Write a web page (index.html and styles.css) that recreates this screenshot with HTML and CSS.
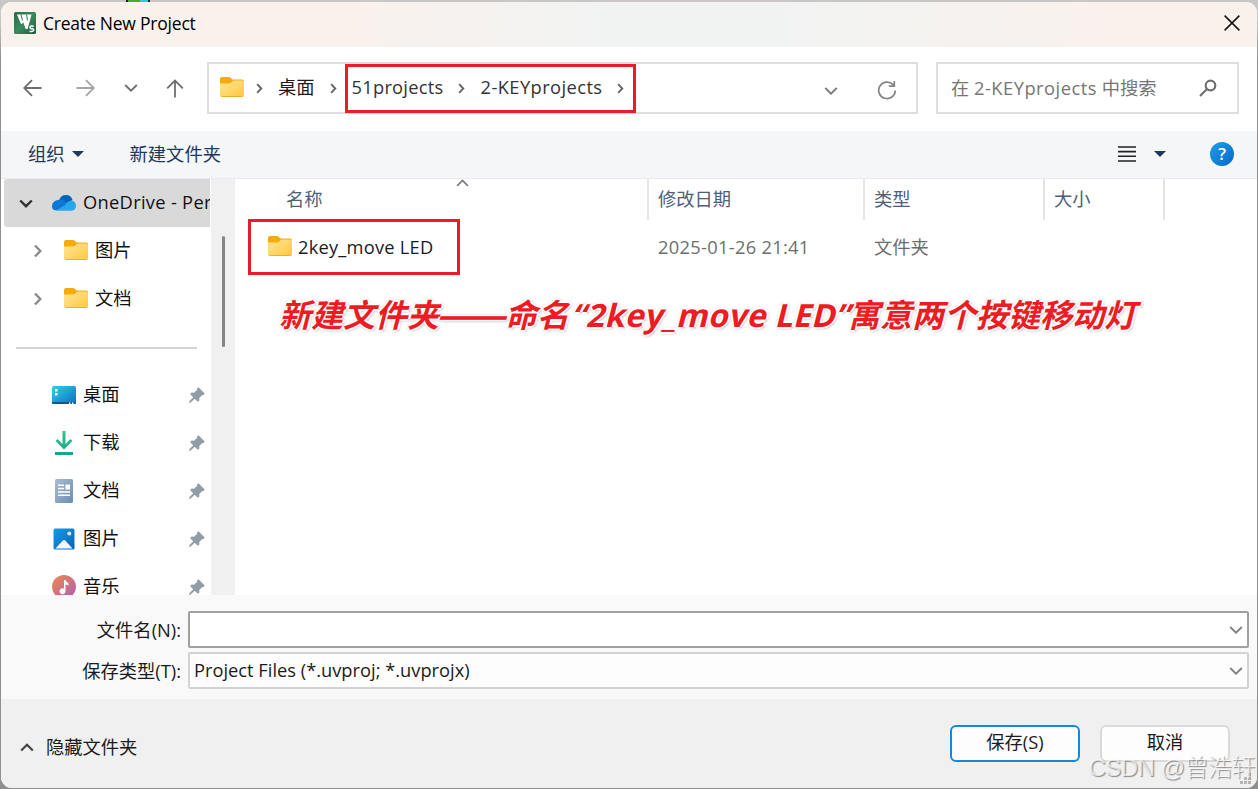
FILE: index.html
```html
<!DOCTYPE html>
<html lang="zh-CN">
<head>
    <meta charset="UTF-8">
    <meta name="viewport" content="width=device-width, initial-scale=1.0">
    <title>Create New Project</title>
    <link rel="stylesheet" href="styles.css">
</head>
<body>
    <!-- Shared icons -->
    <svg class="defs" width="0" height="0">
        <defs>
            <linearGradient id="gFolder" x1="0" y1="0" x2="1" y2="1">
                <stop offset="0" stop-color="#ffe69c"/><stop offset="1" stop-color="#ffc83a"/>
            </linearGradient>
            <linearGradient id="gDesk" x1="0" y1="0" x2="1" y2="1">
                <stop offset="0" stop-color="#35d0e4"/><stop offset="1" stop-color="#0a6fc2"/>
            </linearGradient>
            <linearGradient id="gDoc" x1="0" y1="0" x2="1" y2="1">
                <stop offset="0" stop-color="#a9bdd3"/><stop offset="1" stop-color="#6f8db0"/>
            </linearGradient>
            <linearGradient id="gPic" x1="0" y1="0" x2="1" y2="1">
                <stop offset="0" stop-color="#1a9be6"/><stop offset="1" stop-color="#0563b8"/>
            </linearGradient>
            <linearGradient id="gMusic" x1="0" y1="0" x2="1" y2="1">
                <stop offset="0" stop-color="#f08a4b"/><stop offset="1" stop-color="#b05cb4"/>
            </linearGradient>
            <linearGradient id="gDown" x1="0" y1="0" x2="0" y2="1">
                <stop offset="0" stop-color="#35c48d"/><stop offset="1" stop-color="#12a594"/>
            </linearGradient>
            <linearGradient id="gApp" x1="0" y1="0" x2="1" y2="1">
                <stop offset="0" stop-color="#2a6a4c"/><stop offset=".5" stop-color="#3b8a5c"/><stop offset="1" stop-color="#1f5b3b"/>
            </linearGradient>
        </defs>
        <symbol id="folder" viewBox="0 0 24 20">
            <path fill="#f3ac0b" d="M0 8V2Q0 0 2 0h7q1 0 1.700.7L12.500 2.500H22q2 0 2 2V8z"/>
            <path fill="url(#gFolder)" d="M0 6.500h9q1.200 0 2-.8l1.500-1.500q.7-.7 1.700-.7H22q2 0 2 2V18q0 2-2 2H2q-2 0-2-2z"/>
            <path stroke="#eeae2c" fill="none" stroke-width="1" d="M.8 18.900q.5.600 1.400.6h19.600q.9 0 1.400-.6"/>
        </symbol>
        <symbol id="pin" viewBox="0 0 16 16">
            <path fill="#919ca4" d="M9.500.3 15.700 6.500 14.500 8l-1.200-.1-3 3 .1 2.600-1.700 1.300-3-3L1.300 15.700H.2v-1.100L4.200 10.300 1.200 7.200 2.500 5.600l2.600.1 3-3-.1-1.200z"/>
        </symbol>
        <symbol id="down" viewBox="0 0 14 8"><path fill="none" stroke="currentColor" d="M1.200 1 7 6.700 12.800 1"/></symbol>
        <symbol id="right" viewBox="0 0 8 14"><path fill="none" stroke="currentColor" stroke-width="2.400" d="M1 1.500 6.300 7 1 12.500"/></symbol>
    </svg>

    <div class="dialog">
        <header class="titlebar">
            <svg class="app-icon" viewBox="0 0 22 22">
                <rect width="22" height="22" rx="1.500" fill="url(#gApp)"/>
                <path fill="#fff" d="M3 2.500h14.500L13.600 17h-1.900L9.400 10.500 7.800 12H7z"/>
                <path stroke="#3b8a5c" stroke-width="1.100" d="m7 2.500 1.500 6M12.500 2.500l1 6"/>
                <path fill="none" stroke="#fff" stroke-width="1.500" d="M19.800 14.200q-3.800-.8-3.800 1t1.800 1.400q2.200.3 1.800 1.800t-4 .9"/>
            </svg>
            <span class="title">Create New Project</span>
            <svg class="close" viewBox="0 0 16 16"><path stroke="#111" stroke-width="1.500" d="m.6.600 14.800 14.800M15.400.6.600 15.400"/></svg>
        </header>

        <nav class="navbar">
            <div class="nav-buttons">
                <svg width="19" height="18" viewBox="0 0 19 18"><path d="M18.500 9H1.500M9 1.200 1.200 9 9 16.800"/></svg>
                <svg class="disabled" width="19" height="18" viewBox="0 0 19 18"><path d="M.5 9h17M10 1.200 17.800 9 10 16.800"/></svg>
                <svg class="recent" width="14" height="8" viewBox="0 0 14 8"><path d="M1.200 1 7 6.700 12.800 1"/></svg>
                <svg width="18" height="19" viewBox="0 0 18 19"><path d="M9 18.500V1.500M1.200 9.300 9 1.500l7.800 7.800"/></svg>
            </div>
            <div class="address">
                <svg class="folder"><use href="#folder"/></svg>
                <svg class="sep"><use href="#right"/></svg>
                <span class="crumb-root">桌面</span>
                <svg class="sep"><use href="#right"/></svg>
                <div class="crumbs">
                    <span class="crumb-a">51projects</span>
                    <svg class="sep"><use href="#right"/></svg>
                    <span class="crumb-b">2-KEYprojects</span>
                    <svg class="sep"><use href="#right"/></svg>
                </div>
                <svg class="addr-down"><use href="#down"/></svg>
                <svg class="refresh" viewBox="0 0 20 20"><path fill="none" stroke="#858585" stroke-width="1.700" d="M18.300 10.500A8.300 8.300 0 1 1 16 4.600l1.200 1.200M17.300 1v5.200h-5.500"/></svg>
            </div>
            <div class="search">
                <span>在 <span class="latin">2-KEYprojects</span> 中搜索</span>
                <svg viewBox="0 0 18 18"><circle cx="11.500" cy="6.500" r="4.800"/><path d="M8 10 1 17"/></svg>
            </div>
        </nav>

        <div class="toolbar">
            <span>组织</span><i class="caret"></i>
            <span class="new-folder">新建文件夹</span>
            <svg class="view" viewBox="0 0 18 16"><path stroke="#222" stroke-width="1.600" d="M0 1h18M0 5.600h18M0 10.300h18M0 15h18"/></svg>
            <i class="caret"></i>
            <span class="help">?</span>
        </div>

        <main class="content">
            <aside class="tree">
                <div class="item selected">
                    <svg class="expander"><use href="#down"/></svg>
                    <svg class="icon" viewBox="0 0 24 24">
                        <path fill="#0364b8" d="M7 12q0-8 7-8 5 0 6.500 5l-6 4z"/>
                        <path fill="#0a78d4" d="M0 15.500Q0 10 6 9q5-1.500 8 2l5 3-15 5.500q-4-.5-4-4z"/>
                        <path fill="#28a8ea" d="m4 19.500 9-5.500q3-4.800 7.500-4.600Q24 11 24 15t-4.500 4.800H5z"/>
                    </svg>
                    <span class="label onedrive">OneDrive - Per</span>
                </div>
                <div class="item child">
                    <svg class="expander"><use href="#right"/></svg>
                    <svg class="folder"><use href="#folder"/></svg>
                    <span class="label">图片</span>
                </div>
                <div class="item child">
                    <svg class="expander"><use href="#right"/></svg>
                    <svg class="folder"><use href="#folder"/></svg>
                    <span class="label">文档</span>
                </div>
                <div class="divider"></div>
                <div class="item quick">
                    <svg class="icon" viewBox="0 0 24 24"><rect y="3" width="24" height="18" rx="1.500" fill="url(#gDesk)"/><path fill="#0b5a94" d="M0 19h24v.5q0 1.500-1.500 1.500h-21Q0 21 0 19.500z"/><path fill="#fff" d="M3 6h2.500v2.500H3zM3 10h2.500v2.500H3zM17 19.500h1.500V21H17zM20 19.500h1.500V21H20z"/></svg>
                    <span class="label">桌面</span>
                    <svg class="pin"><use href="#pin"/></svg>
                </div>
                <div class="item quick">
                    <svg class="icon" viewBox="0 0 24 24"><path fill="url(#gDown)" d="M10.500 0h3v13l5-5 1.900 1.900L12 18.500 3.600 9.900 5.500 8l5 5zM3 21h18v2.900H3z"/></svg>
                    <span class="label">下载</span>
                    <svg class="pin"><use href="#pin"/></svg>
                </div>
                <div class="item quick">
                    <svg class="icon" viewBox="0 0 24 24"><rect x="3" width="18" height="24" rx="1.500" fill="url(#gDoc)"/><path stroke="#fff" stroke-width="1.500" d="M6 6.300h6M6 9.500h6M6 13h12M6 16.300h12"/><path fill="#fff" d="M13.500 5.500H18v5h-4.500z"/></svg>
                    <span class="label">文档</span>
                    <svg class="pin"><use href="#pin"/></svg>
                </div>
                <div class="item quick">
                    <svg class="icon" viewBox="0 0 24 24"><rect x="1.500" y="1.500" width="21" height="21" rx="1.500" fill="url(#gPic)"/><path fill="#f3f9ff" d="m3.500 21.500 7.300-8q1.200-1.200 2.400 0l7.300 8z"/><circle cx="17.300" cy="6.500" r="2" fill="#d8edfb"/></svg>
                    <span class="label">图片</span>
                    <svg class="pin"><use href="#pin"/></svg>
                </div>
                <div class="item quick">
                    <svg class="icon" viewBox="0 0 24 24"><circle cx="12" cy="12" r="12" fill="url(#gMusic)"/><path fill="#fff" d="M12 5h1.500q.5 2.500 3 3v2.300q-1.700 0-3-1v7a3 3 0 1 1-1.500-2.600z"/></svg>
                    <span class="label">音乐</span>
                    <svg class="pin"><use href="#pin"/></svg>
                </div>
            </aside>
            <div class="scrollbar"><div class="thumb"></div></div>

            <section class="files">
                <div class="columns head">
                    <span class="name">名称<svg class="sort"><use href="#down"/></svg></span>
                    <span>修改日期</span>
                    <span>类型</span>
                    <span>大小</span>
                </div>
                <div class="columns row">
                    <div class="file-name">
                        <svg class="folder"><use href="#folder"/></svg>
                        <span class="file-label">2key_move LED</span>
                    </div>
                    <span class="date">2025-01-26 21:41</span>
                    <span>文件夹</span>
                </div>
                <p class="note">新建文件夹<span class="dash">——</span>命名<span class="note-latin">“2key_move LED”</span>寓意两个按键移动灯</p>
            </section>
        </main>

        <div class="form">
            <label>文件名(N):</label>
            <div class="combo editable"><span></span><svg><use href="#down"/></svg></div>
            <label>保存类型(T):</label>
            <div class="combo"><span class="filter">Project Files (*.uvproj; *.uvprojx)</span><svg><use href="#down"/></svg></div>
        </div>

        <footer class="footer">
            <svg class="collapse"><use href="#down"/></svg>
            <span class="hide-folders">隐藏文件夹</span>
            <button class="primary">保存(S)</button>
            <button>取消</button>
        </footer>
    </div>
    <svg class="grip" viewBox="0 0 12 12"><path fill="#b5b5b5" d="M8 0h3v3H8zM8 4h3v3H8zM4 4h3v3H4zM8 8h3v3H8zM4 8h3v3H4zM0 8h3v3H0z"/></svg>
    <div class="watermark">CSDN @曾浩轩</div>
</body>
</html>
```
FILE: styles.css
```css
* {
    box-sizing: border-box;
}

body {
    margin: 0;
    width: 1258px;
    height: 789px;
    overflow: hidden;
    position: relative;
    background:
        linear-gradient(90deg, #222 2px, #3fae3a 2px, #3fae3a 14px, #35c8d8 14px, #35c8d8 22px, #222 22px) 126px 0 / 24px 2px no-repeat,
        linear-gradient(#c9c7c6 0, #c9c7c6 20px, #8f8f8f 60px);
    font-family: "Open Sans", "Noto Sans CJK SC", sans-serif;
    font-size: 18.3px;
    line-height: 24px;
    color: #1b1b1b;
    white-space: nowrap;
}

svg {
    display: block;
    flex: none;
    stroke-width: 1.8;
}

.defs {
    position: absolute;
}

.dialog {
    width: 1256px;
    height: 786px;
    margin: 2px 1px 1px;
    border-radius: 11px;
    overflow: hidden;
    background: #fff;
    display: flex;
    flex-direction: column;
}

/* Title bar */
.titlebar {
    height: 45px;
    display: flex;
    align-items: center;
    padding: 0 17px 3px 13px;
    background: linear-gradient(90deg, #f9f1ec 0, #f9f1ec 28%, #f1f3f2 48%, #f1f3f2 62%, #f9f1ec 88%);
}

.app-icon {
    width: 22px;
    height: 22px;
}

.title {
    margin-left: 7px;
    font-size: 17.5px;
    letter-spacing: -.22px;
    color: #000;
}

.close {
    width: 16px;
    height: 16px;
    margin-left: auto;
}

/* Address row */
.navbar {
    height: 84px;
    display: flex;
    align-items: center;
    padding: 0 18px 2px 22px;
}

.nav-buttons {
    width: 184px;
    display: flex;
    align-items: center;
    gap: 33.500px;
    fill: none;
    stroke: #6e6e6e;
}

.nav-buttons .disabled {
    stroke: #a5a5a5;
}

.nav-buttons .recent {
    margin: 0 -6px 0 -4px;
}

.address {
    width: 711px;
    height: 52px;
    border: 2px solid #dedede;
    display: flex;
    align-items: center;
    padding-left: 11px;
}

.folder {
    width: 24px;
    height: 20px;
}

.address > .folder {
    margin-bottom: 2px;
}

.sep {
    width: 7px;
    height: 11px;
    color: #666;
}

.address > .sep {
    margin-left: 12px;
}

.crumb-root {
    margin: 0 0 3px 15px;
}

.address > .crumb-root + .sep {
    margin-left: 15px;
}

.crumbs {
    width: 291px;
    height: 49px;
    margin-left: 8px;
    padding-left: 4px;
    border: 3px solid #ed1c24;
    display: flex;
    align-items: center;
    color: #333;
}

.crumb-a {
    width: 106px;
    margin-bottom: 2px;
    letter-spacing: .25px;
}

.crumb-b {
    width: 136px;
    margin: 0 0 2px 16px;
    letter-spacing: .42px;
}

.addr-down {
    width: 14px;
    height: 8px;
    margin: 5px 0 0 188px;
    color: #7c7c7c;
}

.refresh {
    width: 20px;
    height: 20px;
    margin: 3px 0 0 39px;
}

.search {
    width: 303px;
    height: 52px;
    margin-left: 18px;
    border: 2px solid #dedede;
    padding: 0 20px 0 13px;
    display: flex;
    align-items: center;
    justify-content: space-between;
    color: #767676;
}

.search .latin {
    letter-spacing: .5px;
}

.search svg {
    width: 18px;
    height: 18px;
    fill: none;
    stroke: #707070;
    stroke-width: 2.2;
}

/* Command bar */
.toolbar {
    height: 48px;
    background: #f4f6f8;
    border-bottom: 1px solid #e7eaee;
    display: flex;
    align-items: center;
    padding: 0 23px 2px 27px;
    color: #1e395b;
}

.caret {
    border: 6px solid transparent;
    border-top-color: #1e395b;
    border-bottom: 0;
    margin-left: 7px;
}

.new-folder {
    margin-left: 46px;
}

.view {
    width: 18px;
    height: 16px;
    margin-left: auto;
}

.view + .caret {
    margin-left: 18px;
}

.help {
    width: 24px;
    height: 24px;
    margin-left: 44px;
    border-radius: 50%;
    background: linear-gradient(135deg, #1fa0e8, #0767c8);
    color: #fff;
    font-size: 17px;
    font-weight: 600;
    text-align: center;
}

/* Folder tree */
.content {
    height: 416px;
    display: flex;
}

.tree {
    width: 210px;
    overflow: hidden;
}

.item {
    height: 48px;
    display: flex;
    align-items: center;
}

.item .label {
    margin: 0 0 2px 7px;
    color: #111;
}

.item .onedrive {
    letter-spacing: .3px;
}

.item.selected {
    width: 206px;
    margin-left: 3px;
    padding-left: 15px;
    background: #d9d9d9;
    border-radius: 3px 0 0 3px;
    overflow: hidden;
}

.icon {
    width: 24px;
    height: 24px;
}

.selected .expander {
    width: 14px;
    height: 9px;
    margin-right: 19px;
    color: #333;
    stroke-width: 2.4;
}

.child {
    padding-left: 33px;
}

.child .expander {
    width: 8px;
    height: 14px;
    margin-right: 22px;
    color: #8b8b8b;
}

.child .folder {
    margin-bottom: 2px;
}

.quick {
    padding: 0 6px 0 51px;
}

.pin {
    width: 16px;
    height: 16px;
    margin-left: auto;
}

.divider {
    height: 48px;
    margin: 0 14px 0 15px;
    background: linear-gradient(#d4d4d4, #d4d4d4) 0 24px / 100% 2px no-repeat;
}

.scrollbar {
    width: 24px;
    background: #f0f0f0;
    padding: 57px 0 0 11px;
}

.thumb {
    width: 3px;
    height: 111px;
    border-radius: 2px;
    background: #868686;
}

/* File list */
.files {
    flex: 1;
}

.columns {
    display: grid;
    grid-template-columns: 414px 216px 180px 120px;
}

.head {
    height: 41px;
    line-height: 40px;
    color: #4c607a;
}

.head span {
    padding-left: 9px;
    border-right: 2px solid #e5e5e5;
}

.head .name {
    padding-left: 51px;
    position: relative;
}

.sort {
    position: absolute;
    left: 221px;
    top: 0;
    width: 13px;
    height: 8px;
    color: #7a7a7a;
    transform: rotate(180deg);
}

.row {
    height: 56px;
    margin-top: -1px;
    align-items: center;
    color: #6d6d6d;
}

.row > span {
    padding-left: 9px;
}

.row .date {
    letter-spacing: .3px;
}

.file-name {
    width: 212px;
    height: 56px;
    margin-left: 13px;
    padding-left: 17px;
    border: 3px solid #ed1c24;
    display: flex;
    align-items: center;
    color: #1b1b1b;
}

.file-name .folder {
    margin-bottom: 2px;
}

.file-label {
    margin-left: 6px;
    letter-spacing: .22px;
}

.note {
    margin: 16px 0 0 44px;
    font-size: 32px;
    line-height: 44px;
    font-weight: 700;
    font-style: italic;
    color: #ed1c24;
    text-shadow: 2px 0 #fff, -2px 0 #fff, 0 2px #fff, 0 -2px #fff, 0 0 3px #777, 1px 1px 3px #888;
}

.dash {
    display: inline-block;
    width: 66px;
    font-family: "Noto Sans CJK SC", sans-serif;
    font-weight: 500;
    -webkit-text-stroke: 1px #ed1c24;
    transform-origin: left;
    transform: translateX(-3px) scaleX(1.28);
}

/* Upright bold, slanted by hand: keeps the wide letter shapes */
.note-latin {
    display: inline-block;
    width: 279px;
    padding-left: 5px;
    font-style: normal;
    letter-spacing: .35px;
    transform: skewX(-14deg);
}

/* File name and type */
.form {
    height: 104px;
    background: #f9f9f9;
    display: grid;
    grid-template-columns: 180px 1061px;
    grid-template-rows: 37px 37px;
    column-gap: 7px;
    row-gap: 4px;
    padding-top: 16px;
    align-items: center;
}

.form label {
    text-align: right;
}

.combo {
    height: 37px;
    border: 2px solid #d3d3d3;
    border-radius: 2px;
    background: #fdfdfd;
    display: flex;
    align-items: center;
    justify-content: space-between;
    padding: 0 4px;
}

.combo.editable {
    border-color: #a0a0a0;
    background: #fff;
}

.filter {
    margin-bottom: 2px;
}

.combo svg {
    width: 14px;
    height: 8px;
    color: #808080;
}

.footer {
    flex: 1;
    background: #f0f0f0;
    display: flex;
    align-items: center;
    padding: 0 27px 0 19px;
}

.collapse {
    width: 14px;
    height: 9px;
    color: #444;
    stroke-width: 2.2;
    transform: rotate(180deg);
    margin-top: 8px;
}

.hide-folders {
    margin: 6px auto 0 12px;
}

button {
    width: 130px;
    height: 37px;
    border: 2px solid #dadada;
    border-radius: 6px;
    background: #fdfdfd;
    font: inherit;
    color: inherit;
    padding: 0 0 3px;
    margin-left: 20px;
}

button.primary {
    border-color: #1a86d9;
}

.grip {
    position: absolute;
    right: 6px;
    bottom: 4px;
    width: 12px;
    height: 12px;
}

.watermark {
    position: absolute;
    right: 3px;
    bottom: 5px;
    font-family: "Liberation Sans", "Noto Sans CJK SC", sans-serif;
    font-size: 24px;
    line-height: 32px;
    letter-spacing: -.5px;
    font-weight: 300;
    color: rgba(255, 255, 255, .7);
    text-shadow: 1px 1px 1px #8a8a8a;
}
```
